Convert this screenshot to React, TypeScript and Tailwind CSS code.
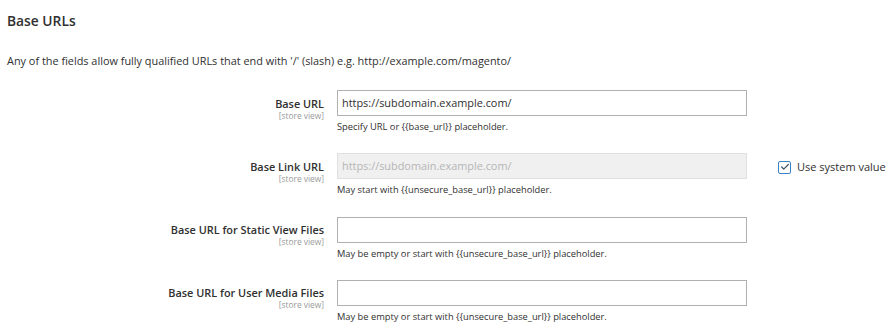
import { Check } from "lucide-react";

interface Field {
  label: string;
  value?: string;
  note: string;
  disabled?: boolean;
  systemValue?: boolean;
}

const fields: Field[] = [
  {
    label: "Base URL",
    value: "https://subdomain.example.com/",
    note: "Specify URL or {{base_url}} placeholder.",
  },
  {
    label: "Base Link URL",
    value: "https://subdomain.example.com/",
    note: "May start with {{unsecure_base_url}} placeholder.",
    disabled: true,
    systemValue: true,
  },
  {
    label: "Base URL for Static View Files",
    note: "May be empty or start with {{unsecure_base_url}} placeholder.",
  },
  {
    label: "Base URL for User Media Files",
    note: "May be empty or start with {{unsecure_base_url}} placeholder.",
  },
];

function FieldRow({ field }: { field: Field }) {
  return (
    <div className="flex h-[63.3px]">
      <div className="w-[324px] shrink-0 pt-[6.5px] text-right">
        <div className="text-[10.9px] leading-[14px] font-semibold text-[#303030]">{field.label}</div>
        <div className="text-[8.4px] leading-[10px] text-[#9a9a9a]">[store view]</div>
      </div>
      <div className="ml-[13px] w-[410px] shrink-0">
        <div
          className={`h-[26px] border px-[4px] text-[10.9px] leading-[24px] ${
            field.disabled
              ? "border-[#e0e0e0] bg-[#f0f0f0] text-[#b5b5b5]"
              : "border-[#b0b0b0] bg-white text-[#303030]"
          }`}
        >
          {field.value}
        </div>
        <div className="mt-[5px] text-[9.3px] leading-[12px] text-[#303030]">{field.note}</div>
      </div>
      {field.systemValue && (
        <label className="ml-[31px] mt-[1px] flex h-[26px] items-center gap-[6px] text-[11px] text-[#303030]">
          <span className="flex h-[13px] w-[13px] items-center justify-center rounded-[2px] border border-[#3b82c4] bg-white">
            <Check size={10} strokeWidth={3} className="text-[#41566a]" />
          </span>
          Use system value
        </label>
      )}
    </div>
  );
}

export default function App() {
  return (
    <div className="h-[331px] w-[893px] overflow-hidden bg-white font-['Open_Sans',sans-serif]">
      <h2 className="pl-[7px] pt-[12px] text-[13.8px] leading-[18px] font-semibold text-[#303030]">Base URLs</h2>
      <p className="mt-[24px] pl-[7px] text-[10.9px] leading-[14px] text-[#303030]">
        Any of the fields allow fully qualified URLs that end with '/' (slash) e.g. http://example.com/magento/
      </p>
      <div className="mt-[22px]">
        {fields.map((f, i) => (
          <FieldRow key={i} field={f} />
        ))}
      </div>
    </div>
  );
}
